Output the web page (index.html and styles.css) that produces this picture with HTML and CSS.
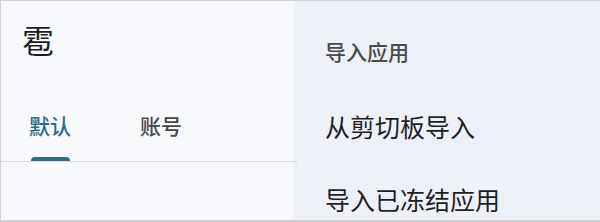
FILE: index.html
```html
<!DOCTYPE html>
<html lang="zh">
<head>
<meta charset="utf-8">
<link rel="stylesheet" href="styles.css">
</head>
<body>
<div class="frame">
  <div class="main">
    <h1 class="title">雹</h1>
    <div class="tabs">
      <div class="tab active"><span class="tab-label">默认</span><span class="indicator"></span></div>
      <div class="tab"><span class="tab-label">账号</span></div>
    </div>
    <div class="divider"></div>
  </div>
  <div class="menu">
    <div class="menu-header">导入应用</div>
    <div class="menu-item first">从剪切板导入</div>
    <div class="menu-item">导入已冻结应用</div>
  </div>
</div>
</body>
</html>
```
FILE: styles.css
```css
html, body {
  margin: 0;
  padding: 0;
}
body {
  width: 600px;
  height: 222px;
  overflow: hidden;
  background: #f8f9fc;
  font-family: "Noto Sans CJK SC", "Noto Sans", sans-serif;
}
.frame {
  position: relative;
  width: 600px;
  height: 222px;
  box-sizing: border-box;
  border-top: 1px solid #d4d4d6;
  border-left: 1px solid #d4d4d6;
  border-bottom: 2px solid #d0d0d2;
  overflow: hidden;
}
.main {
  display: flex;
  flex-direction: column;
}
.title {
  margin: 22px 0 0 21px;
  font-size: 32px;
  line-height: 32px;
  font-weight: 400;
  color: #1e1e1e;
}
.tabs {
  display: flex;
  margin-top: 60px;
  padding-left: 27px;
}
.tab {
  display: flex;
  flex-direction: column;
  align-items: center;
  width: 44px;
  margin-right: 67px;
}
.tab-label {
  font-size: 21px;
  line-height: 21px;
  color: #474747;
  font-weight: 500;
}
.tab.active .tab-label {
  color: #2f6b88;
}
.indicator {
  margin-top: 21px;
  width: 39px;
  height: 4px;
  border-radius: 4px 4px 0 0;
  background: #2f6b88;
}
.divider {
  height: 1px;
  background: #dcdcde;
}
.tabs .tab:not(.active) .tab-label {
  margin-bottom: 25px;
}
.menu {
  position: absolute;
  top: 0;
  left: 296px;
  width: 304px;
  height: 222px;
  background: #eef0f7;
  box-shadow: -2px 0 4px rgba(0, 0, 0, 0.06);
  padding-left: 28px;
  box-sizing: border-box;
  display: flex;
  flex-direction: column;
}
.menu-header {
  margin-top: 40px;
  font-size: 21px;
  line-height: 21px;
  color: #4a4a4a;
  font-weight: 500;
}
.menu-item {
  font-size: 25px;
  line-height: 25px;
  color: #1f1f1f;
  margin-top: 48px;
}
.menu-item.first {
  margin-top: 52px;
}
```
